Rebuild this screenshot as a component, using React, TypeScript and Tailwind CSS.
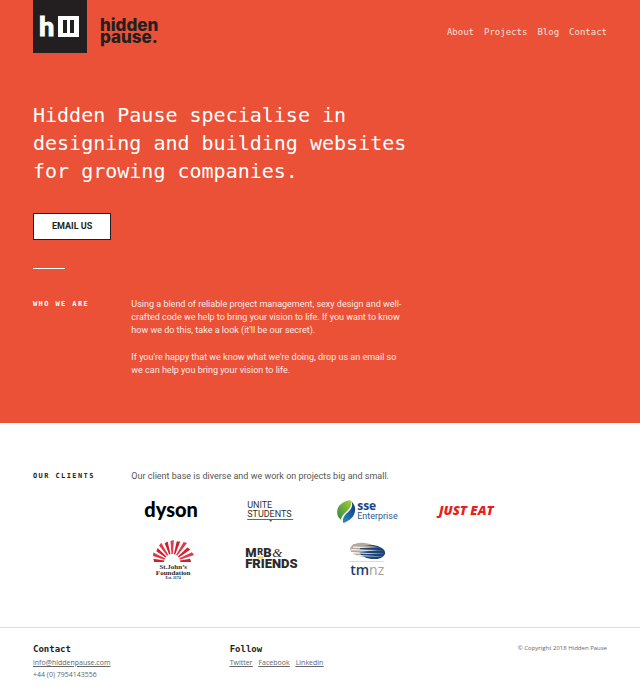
import React from "react";

const mono = "font-['DejaVu_Sans_Mono','Liberation_Mono',monospace]";
const sans = "font-[Roboto,'Open_Sans',sans-serif]";
const footerSans = "font-['Open_Sans','Noto_Sans',sans-serif]";

function BrandMark() {
  return (
    <svg viewBox="0 0 54 53" className="h-[53px] w-[54px]" aria-hidden="true">
      <rect width="54" height="53" fill="#231f20" />
      <text x="6" y="36" fill="#fff" stroke="#fff" strokeWidth="1" fontFamily="Lato, sans-serif" fontWeight="900" fontSize="27">h</text>
      <path fillRule="evenodd" fill="#fff" d="M25 16h21v21H25zM30 20v13h4V20zM37 20v13h4V20z" />
    </svg>
  );
}

function Dyson() {
  return (
    <svg viewBox="0 0 82 40" className="h-10 w-full" role="img" aria-label="dyson">
      <text x="40" y="26" textAnchor="middle" fill="#000" fontFamily="Lato, sans-serif" fontWeight="900" fontSize="20">dyson</text>
    </svg>
  );
}

function UniteStudents() {
  return (
    <svg viewBox="0 0 82 40" className="h-10 w-full" role="img" aria-label="Unite Students">
      <g fill="#333" fontFamily="Roboto, sans-serif" fontSize="9">
        <text x="17" y="17">UNITE</text>
        <text x="17" y="26">STUDENTS</text>
      </g>
      <path d="M17 28.500h46" stroke="#666" strokeWidth="1" />
      <path d="M39 29h3l-1.500 2z" fill="#555" />
    </svg>
  );
}

function Sse() {
  return (
    <svg viewBox="0 0 82 40" className="h-10 w-full" role="img" aria-label="SSE Enterprise">
      <defs>
        <linearGradient id="sseGreen" x1="0" y1="1" x2="1" y2="0">
          <stop offset="0" stopColor="#2f8a3c" />
          <stop offset="1" stopColor="#a5ce39" />
        </linearGradient>
        <linearGradient id="sseBlue" x1="0" y1="1" x2="1" y2="0">
          <stop offset="0" stopColor="#2b8ec4" />
          <stop offset="1" stopColor="#0c3475" />
        </linearGradient>
      </defs>
      <path d="M22 9C17 10 9 13 9 21c0 3 1 6 4 8 0-4 3-6 6-9 4-4 5-7 3-11z" fill="url(#sseGreen)" />
      <path d="M23 10c2 4 1 7-3 11-3 3-6 5-5 11 6-2 12-6 12-14 0-3-2-6-4-8z" fill="url(#sseBlue)" />
      <text x="29" y="19" fill="#164484" fontFamily="Open Sans, sans-serif" fontWeight="700" fontSize="12">sse</text>
      <text x="29" y="28" fill="#2d5b96" fontFamily="Roboto, sans-serif" fontSize="9">Enterprise</text>
    </svg>
  );
}

function JustEat() {
  return (
    <svg viewBox="0 0 82 40" className="h-10 w-full" role="img" aria-label="Just Eat">
      <text x="40" y="24" textAnchor="middle" fill="#e8201a" fontFamily="Open Sans, sans-serif" fontWeight="800" fontStyle="italic" fontSize="13">JUST EAT</text>
    </svg>
  );
}

const rayLengths = [18, 20, 19, 21, 20, 21, 21, 23, 21, 22, 18];

function StJohns() {
  return (
    <svg viewBox="0 0 82 46" className="h-[46px] w-full" role="img" aria-label="St. John's Foundation">
      {rayLengths.map((length, i) => (
        <path
          key={i}
          d={`M-.7-8L-1.700-${length}L1.700-${length + 1}L.7-8z`}
          transform={`translate(41 25) rotate(${-85 + i * 17})`}
          fill={i % 2 ? "#e03a46" : "#cc2030"}
        />
      ))}
      <g fill="#2b2b2b" textAnchor="middle" fontFamily="Liberation Serif, serif" fontWeight="700">
        <text x="42" y="32" fontSize="7">St.John’s</text>
        <text x="42" y="38" fontSize="7">Foundation</text>
        <text x="42" y="42" fontSize="4">Est. 1174</text>
      </g>
    </svg>
  );
}

function MrB() {
  return (
    <svg viewBox="0 0 82 46" className="h-[46px] w-full" role="img" aria-label="Mr B & Friends">
      <path d="M27 20.500h6" stroke="#f2cf2a" strokeWidth="2" />
      <text fill="#2b2b2b" fontFamily="Roboto, sans-serif" fontWeight="900" fontSize="13">
        <tspan x="15" y="20">M</tspan>
        <tspan x="27" y="18" fontSize="9">R</tspan>
        <tspan x="33" y="20">B</tspan>
        <tspan x="42" y="20" fontFamily="Liberation Serif, serif" fontStyle="italic" fontWeight="400" fontSize="13">&amp;</tspan>
      </text>
      <text x="15" y="31" fill="#2b2b2b" fontFamily="Roboto, sans-serif" fontWeight="900" fontSize="13">FRIENDS</text>
    </svg>
  );
}

function Tmnz() {
  return (
    <svg viewBox="0 0 82 46" className="h-[46px] w-full" role="img" aria-label="tmnz">
      <g transform="translate(1 1)">
        <ellipse cx="35" cy="12" rx="14" ry="7" transform="rotate(6 35 12)" fill="#b3a99d" />
        <ellipse cx="43" cy="14" rx="13" ry="7" transform="rotate(6 43 14)" fill="#1c4478" />
        <g fill="#b3a99d">
          <path d="M24 6l24 2.500-26 1.500z" />
          <path d="M22 11l26 1-24 3z" />
        </g>
        <g fill="#fff">
          <path d="M24 8.500l27 1.500-27-.3z" />
          <path d="M22 11l32 2-32-.8z" />
          <path d="M22 14l34 2-33-.6z" />
          <path d="M28 17l27 1.500-26-.2z" />
        </g>
      </g>
      <path d="M21 24.500h35" stroke="#ddd" />
      <text x="22" y="38" fontFamily="Open Sans, sans-serif" fontSize="14">
        <tspan fill="#1c3f72" fontWeight="600">tm</tspan>
        <tspan fill="#a89f93">nz</tspan>
      </text>
    </svg>
  );
}

export default function App() {
  return (
    <div className={`min-h-screen bg-white text-[9px] leading-[13px] text-[#555] ${sans}`}>
      <div className="bg-[#ea5136] px-[33px] pb-[46px] text-white">
        <header className="flex items-start justify-between">
          <a href="#home" className="flex items-start gap-[13px]" aria-label="hidden pause.">
            <BrandMark />
            <span className="pt-[19px] font-[Inter,sans-serif] text-[17px] leading-3 font-extrabold text-[#231f20]">
              hidden
              <br />
              pause.
            </span>
          </a>
          <nav className={`flex gap-[10px] pt-[26px] text-[#fde0da] ${mono}`}>
            <a href="#about">About</a>
            <a href="#projects">Projects</a>
            <a href="#blog">Blog</a>
            <a href="#contact">Contact</a>
          </nav>
        </header>
        <h1 className={`mt-12 max-w-[380px] text-[20px] leading-7 ${mono}`}>
          Hidden Pause specialise in designing and building websites for growing companies.
        </h1>
        <button type="button" className="mt-7 block border border-[#231f20] bg-white px-[18px] py-[6px] font-bold text-[#231f20]">
          EMAIL US
        </button>
        <hr className="mt-7 w-8 border-white" />
        <section className="mt-[29px] grid grid-cols-6 gap-x-4">
          <h2 className={`text-[7px] leading-3 font-bold tracking-[0.2em] ${mono}`}>WHO WE ARE</h2>
          <div className="col-span-3 flex flex-col gap-[14px] pr-2 text-[#fdeae6]">
            <p>
              Using a blend of reliable project management, sexy design and well-crafted code we help to bring your
              vision to life. If you want to know how we do this, take a look (it'll be our secret).
            </p>
            <p>If you're happy that we know what we're doing, drop us an email so we can help you bring your vision to life.</p>
          </div>
        </section>
      </div>

      <section className="grid grid-cols-6 gap-x-4 px-[33px] pt-[47px] pb-11">
        <h2 className={`text-[7px] leading-3 font-bold tracking-[0.2em] whitespace-nowrap text-[#231f20] ${mono}`}>OUR CLIENTS</h2>
        <div className="col-span-4">
          <p>Our client base is diverse and we work on projects big and small.</p>
          <div className="mt-2 grid grid-cols-4 gap-x-4 gap-y-[6px]">
            <Dyson />
            <UniteStudents />
            <Sse />
            <JustEat />
            <StJohns />
            <MrB />
            <Tmnz />
          </div>
        </div>
      </section>

      <footer className={`grid grid-cols-6 gap-x-4 border-t border-[#ddd] px-[33px] pt-[14px] text-[7px] leading-3 text-[#666] ${footerSans}`}>
        <div className="col-span-2">
          <h3 className={`text-[9px] leading-[15px] font-bold text-[#231f20] ${mono}`}>Contact</h3>
          <a href="mailto:info@hiddenpause.com" className="block underline">info@hiddenpause.com</a>
          <p>+44 (0) 7954143556</p>
        </div>
        <div className="col-span-2">
          <h3 className={`text-[9px] leading-[15px] font-bold text-[#231f20] ${mono}`}>Follow</h3>
          <div className="flex gap-[6px] underline">
            <a href="#twitter">Twitter</a>
            <a href="#facebook">Facebook</a>
            <a href="#linkedin">Linkedin</a>
          </div>
        </div>
        <p className="col-span-2 text-right text-[6px]">© Copyright 2018 Hidden Pause</p>
      </footer>
    </div>
  );
}
